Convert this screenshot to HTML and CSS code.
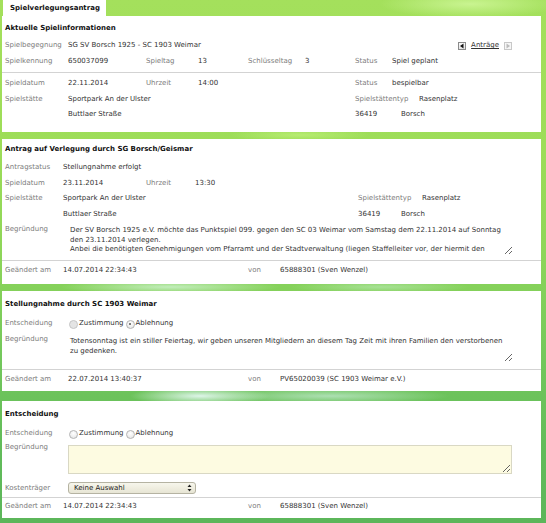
FILE: index.html
```html
<!DOCTYPE html>
<html lang="de">
<head>
<meta charset="utf-8">
<title>Spielverlegungsantrag</title>
<link rel="stylesheet" href="styles.css">
</head>
<body>
<div class="page">
  <div class="tabbar"><div class="tab">Spielverlegungsantrag</div></div>

  <section class="panel p1">
    <h2 class="title">Aktuelle Spielinformationen</h2>
    <div class="row first">
      <span class="lbl w63">Spielbegegnung</span><span class="val">SG SV Borsch 1925 - SC 1903 Weimar</span>
      <span class="nav">
        <span class="navbtn"><svg width="6" height="6" viewBox="0 0 6 6"><polygon points="4.5,0.5 4.5,5.5 1,3" fill="#111"/></svg></span>
        <a class="navlink" href="#">Anträge</a>
        <span class="navbtn dis"><svg width="6" height="6" viewBox="0 0 6 6"><polygon points="1.5,0.5 1.5,5.5 5,3" fill="#bbb"/></svg></span>
      </span>
    </div>
    <div class="row">
      <span class="lbl w63">Spielkennung</span><span class="val w78">650037099</span><span class="lbl w52">Spieltag</span><span class="val w50">13</span><span class="lbl w57">Schlüsseltag</span><span class="val w50">3</span><span class="lbl w37">Status</span><span class="val">Spiel geplant</span>
    </div>
    <hr class="sep s1">
    <div class="row">
      <span class="lbl w63">Spieldatum</span><span class="val w78">22.11.2014</span><span class="lbl w52">Uhrzeit</span><span class="val w157">14:00</span><span class="lbl w37">Status</span><span class="val">bespielbar</span>
    </div>
    <div class="row">
      <span class="lbl w63">Spielstätte</span><span class="val w287">Sportpark An der Ulster</span><span class="lbl w64">Spielstättentyp</span><span class="val">Rasenplatz</span>
    </div>
    <div class="row">
      <span class="lbl w63"></span><span class="val w287">Buttlaer Straße</span><span class="val w46">36419</span><span class="val">Borsch</span>
    </div>
  </section>

  <section class="panel p2">
    <h2 class="title">Antrag auf Verlegung durch SG Borsch/Geismar</h2>
    <div class="row first">
      <span class="lbl w58">Antragstatus</span><span class="val">Stellungnahme erfolgt</span>
    </div>
    <div class="row">
      <span class="lbl w58">Spieldatum</span><span class="val w83">23.11.2014</span><span class="lbl w49">Uhrzeit</span><span class="val">13:30</span>
    </div>
    <div class="row">
      <span class="lbl w58">Spielstätte</span><span class="val w295">Sportpark An der Ulster</span><span class="lbl w64">Spielstättentyp</span><span class="val">Rasenplatz</span>
    </div>
    <div class="row">
      <span class="lbl w58"></span><span class="val w295">Buttlaer Straße</span><span class="val w43">36419</span><span class="val">Borsch</span>
    </div>
    <div class="row multi">
      <span class="lbl w58">Begründung</span>
      <div class="area plain a2">Der SV Borsch 1925 e.V. möchte das Punktspiel 099. gegen den SC 03 Weimar vom Samstag dem 22.11.2014 auf Sonntag<br>den 23.11.2014 verlegen.<br>Anbei die benötigten Genehmigungen vom Pfarramt und der Stadtverwaltung (liegen Staffelleiter vor, der hiermit den</div>
    </div>
    <hr class="sep s2">
    <div class="row">
      <span class="lbl w58">Geändert am</span><span class="val w185">14.07.2014 22:34:43</span><span class="lbl w32">von</span><span class="val">65888301 (Sven Wenzel)</span>
    </div>
  </section>

  <section class="panel p3">
    <h2 class="title">Stellungnahme durch SC 1903 Weimar</h2>
    <div class="row radios">
      <span class="lbl w63">Entscheidung</span>
      <span class="radio off"></span><span class="val">Zustimmung</span>
      <span class="radio checked"></span><span class="val">Ablehnung</span>
    </div>
    <div class="row multi m3">
      <span class="lbl w63">Begründung</span>
      <div class="area plain a3">Totensonntag ist ein stiller Feiertag, wir geben unseren Mitgliedern an diesem Tag Zeit mit ihren Familien den verstorbenen<br>zu gedenken.</div>
    </div>
    <hr class="sep s3">
    <div class="row">
      <span class="lbl w63">Geändert am</span><span class="val w180">22.07.2014 13:40:37</span><span class="lbl w32">von</span><span class="val">PV65020039 (SC 1903 Weimar e.V.)</span>
    </div>
  </section>

  <section class="panel p4">
    <h2 class="title">Entscheidung</h2>
    <div class="row radios r4">
      <span class="lbl w63">Entscheidung</span>
      <span class="radio"></span><span class="val">Zustimmung</span>
      <span class="radio"></span><span class="val">Ablehnung</span>
    </div>
    <div class="row multi">
      <span class="lbl w63">Begründung</span>
      <div class="area input a4"></div>
    </div>
    <div class="row kt">
      <span class="lbl w63">Kostenträger</span>
      <span class="select">Keine Auswahl
        <svg class="arrows" width="5" height="8" viewBox="0 0 5 8"><polygon points="2.5,0.5 4.5,3 0.5,3" fill="#222"/><polygon points="0.5,5 4.5,5 2.5,7.5" fill="#222"/></svg>
      </span>
    </div>
    <hr class="sep s4">
    <div class="row">
      <span class="lbl w58">Geändert am</span><span class="val w185">14.07.2014 22:34:43</span><span class="lbl w32">von</span><span class="val">65888301 (Sven Wenzel)</span>
    </div>
  </section>
</div>
</body>
</html>
```

FILE: styles.css
```css
html, body {
  margin: 0;
  padding: 0;
}
body {
  width: 546px;
  height: 523px;
  overflow: hidden;
  font-family: "DejaVu Sans", Verdana, sans-serif;
  font-size: 7px;
  color: #333;
  background:
    radial-gradient(ellipse 70px 9px at 200px 396px, rgba(228, 248, 240, 0.95), rgba(228, 248, 240, 0)),
    radial-gradient(ellipse 120px 8px at 330px 396px, rgba(200, 236, 215, 0.7), rgba(200, 236, 215, 0)),
    radial-gradient(ellipse 110px 7px at 170px 287px, rgba(205, 242, 205, 0.85), rgba(205, 242, 205, 0)),
    radial-gradient(ellipse 90px 6px at 380px 287px, rgba(190, 236, 190, 0.6), rgba(190, 236, 190, 0)),
    radial-gradient(ellipse 70px 6px at 300px 135px, rgba(190, 240, 120, 0.8), rgba(190, 240, 120, 0)),
    radial-gradient(ellipse 90px 14px at 470px 4px, rgba(205, 246, 150, 0.9), rgba(205, 246, 150, 0)),
    linear-gradient(to bottom, #a4e05c 0%, #9ddd58 28%, #8ed659 48%, #74c85c 68%, #62bc5a 85%, #5cb65a 100%);
}
.page {
  margin-left: 2px;
  width: 539px;
}
.tabbar {
  height: 16px;
  display: flex;
}
.tab {
  margin-left: 1px;
  width: 96px;
  padding-left: 7px;
  background: #fff;
  font-weight: bold;
  color: #111;
  line-height: 17px;
}
.panel {
  background: #fff;
  padding: 5px 3px 0;
}
.p1 { padding-bottom: 9.5px; margin-bottom: 7px; }
.p2 { padding-top: 3px; padding-bottom: 5px; margin-bottom: 7.5px; }
.p3 { padding-top: 6px; padding-bottom: 3.5px; margin-bottom: 10px; }
.p4 { padding-top: 6px; padding-bottom: 3px; }

.title {
  margin: 0;
  height: 14px;
  line-height: 14px;
  font-size: 7px;
  font-weight: bold;
  color: #111;
}
.row {
  display: flex;
  align-items: center;
  height: 15.5px;
  line-height: 15.5px;
  white-space: nowrap;
}
.row.first { margin-top: 3px; }
.p2 .row.first { margin-top: 4px; }

.lbl { color: #7c7c7c; flex: none; }
.val { color: #333; flex: none; }
.w32 { width: 32px; }
.w37 { width: 37px; }
.w43 { width: 43px; }
.w46 { width: 46px; }
.w49 { width: 49px; }
.w50 { width: 50px; }
.w52 { width: 52px; }
.w57 { width: 57px; }
.w58 { width: 58px; }
.w63 { width: 63px; }
.w64 { width: 64px; }
.w78 { width: 78px; }
.w83 { width: 83px; }
.w157 { width: 157px; }
.w180 { width: 180px; }
.w185 { width: 185px; }
.w287 { width: 287px; }
.w295 { width: 295px; }

.sep {
  border: 0;
  border-top: 1px solid #d3d3d3;
  height: 0;
  margin: 0 -3px;
}
.s1 { margin-top: 3px; margin-bottom: 3px; }
.s2 { margin-top: 5px; margin-bottom: 2px; }
.s3 { margin-top: 7px; margin-bottom: 2px; }
.s4 { margin-top: 1px; margin-bottom: 1px; }

/* navigation */
.nav {
  margin-left: auto;
  margin-right: 26px;
  display: flex;
  align-items: center;
}
.navbtn {
  width: 6px;
  height: 6px;
  border: 1px solid #8a8a8a;
  background: linear-gradient(#fafafa, #e4e4e4);
  display: flex;
}
.navbtn.dis { border-color: #c8c8c8; background: #f6f6f6; }
.navlink {
  color: #333;
  text-decoration: underline;
  margin: 0 5px 0 5px;
}

/* multiline */
.row.multi {
  height: auto;
  align-items: flex-start;
}
.row.multi .lbl { line-height: 15.5px; }
.area {
  flex: none;
  box-sizing: border-box;
  overflow: hidden;
  resize: vertical;
  line-height: 9.5px;
  color: #333;
  white-space: nowrap;
  padding: 2px 2px 0;
}
.a2 { width: 445px; height: 31px; margin-top: 2px; margin-left: 5px; }
.a3 { width: 445px; height: 27px; margin-top: 5px; }
.m3 .lbl { margin-top: 2px; }
.a4 {
  width: 444px;
  height: 29px;
  margin-top: 5px;
  background: #fdfbe1;
  border: 1px solid #d9d8c4;
}

/* radios */
.row.radios { height: 14px; line-height: 14px; margin-top: 5px; }
.r4 { margin-top: 5px; }
.radio {
  flex: none;
  box-sizing: border-box;
  width: 9px;
  height: 9px;
  margin: 2px 1px 0 1px;
  border-radius: 50%;
  border: 1px solid #b4b4b4;
  background: radial-gradient(circle at 50% 35%, #ffffff, #e2e2e2);
  position: relative;
}
.radio + .val + .radio { margin-left: 2px; }
.radio.off { background: #e4e4e4; border-color: #c6c6c6; }
.radio.checked::after {
  content: "";
  position: absolute;
  left: 2.5px;
  top: 2.5px;
  width: 2px;
  height: 2px;
  border-radius: 50%;
  background: #555;
}

/* select */
.row.kt { height: 16px; line-height: 16px; margin-top: 6px; }
.select {
  flex: none;
  box-sizing: border-box;
  width: 128px;
  height: 12px;
  line-height: 10px;
  padding-left: 5px;
  border: 1px solid #b5b3a2;
  border-radius: 3px;
  background: linear-gradient(#f7f6ec, #e7e5d4);
  color: #1a1a1a;
  display: flex;
  align-items: center;
}
.arrows { margin-left: auto; margin-right: 3px; }
```
